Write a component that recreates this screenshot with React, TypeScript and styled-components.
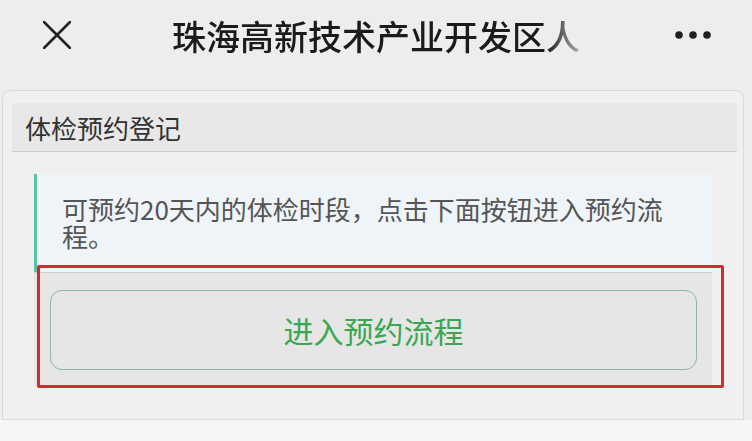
import styled, { createGlobalStyle } from "styled-components";

const GlobalStyle = createGlobalStyle`
   html, body {
      margin: 0;
      padding: 0;
      background-color: #f6f6f6;
      font-family: "Noto Sans CJK SC", "Noto Sans", sans-serif;
   }
`;

const Page = styled.div`
   width: 752px;
   height: 441px;
   overflow: hidden;
   background-color: #f6f6f6;
`;

const NavBar = styled.div`
   display: flex;
   align-items: center;
   height: 70px;
   padding: 0 40px 0 43px;
   background-color: #ededed;
`;

const Title = styled.div`
   margin-left: 101px;
   width: 420px;
   font-size: 34px;
   font-weight: 500;
   color: #1b1b1b;
   white-space: nowrap;
   overflow: hidden;
   -webkit-mask-image: linear-gradient(to right, #000 89%, rgba(0, 0, 0, 0.05) 100%);
   mask-image: linear-gradient(to right, #000 89%, rgba(0, 0, 0, 0.05) 100%);
`;

const More = styled.div`
   margin-left: auto;
   display: flex;
`;

const Wrap = styled.div`
   padding: 20px 8px 0 2px;
   background-color: #ededed;
`;

const Panel = styled.div`
   border: 1px solid #dadada;
   border-radius: 8px 8px 0 0;
   background-color: #f0f0f0;
   padding: 12px 6px 33px 9px;
`;

const PanelHeader = styled.div`
   height: 48px;
   display: flex;
   align-items: center;
   padding-left: 13px;
   background-color: #e8e8e8;
   border-bottom: 1px solid #cdcdcd;
   font-size: 26px;
   color: #333;
`;

const Section = styled.div`
   position: relative;
   margin: 22px 25px 0 22px;
`;

const Notice = styled.div`
   border-left: 3px solid #5cc2a2;
   background-color: #eef4f8;
   padding: 21px 0 23px 25px;
   font-size: 26px;
   line-height: 27px;
   color: #555;
`;

const NoticeText = styled.div`
   width: 615px;
`;

const Actions = styled.div`
   background-color: #e6e6e6;
   border-top: 1px solid #d0d0d0;
   padding: 17px 15px 16px 16px;
`;

const EnterButton = styled.div`
   height: 78px;
   display: flex;
   align-items: center;
   justify-content: center;
   border: 1px solid #8cb99b;
   border-radius: 12px;
   background-color: #e6e6e6;
   font-size: 30px;
   color: #3aa653;
`;

const Highlight = styled.div`
   position: absolute;
   left: 3px;
   top: 91px;
   width: 681px;
   height: 117px;
   border: 3px solid #c9302f;
   border-radius: 2px;
   pointer-events: none;
`;

const CloseIcon = () => (
   <svg width="28" height="28" viewBox="0 0 28 28">
      <path d="M1 1 L27 27 M27 1 L1 27" stroke="#222" strokeWidth="2.6" strokeLinecap="round" />
   </svg>
);

const MoreIcon = () => (
   <svg width="38" height="10" viewBox="0 0 38 10">
      <circle cx="5" cy="5" r="3.8" fill="#1f1f1f" />
      <circle cx="19" cy="5" r="3.8" fill="#1f1f1f" />
      <circle cx="33" cy="5" r="3.8" fill="#1f1f1f" />
   </svg>
);

export default function App() {
   return (
      <Page>
         <GlobalStyle />
         <NavBar>
            <CloseIcon />
            <Title>珠海高新技术产业开发区人</Title>
            <More>
               <MoreIcon />
            </More>
         </NavBar>
         <Wrap>
            <Panel>
               <PanelHeader>体检预约登记</PanelHeader>
               <Section>
                  <Notice>
                     <NoticeText>可预约20天内的体检时段，点击下面按钮进入预约流程。</NoticeText>
                  </Notice>
                  <Actions>
                     <EnterButton>进入预约流程</EnterButton>
                  </Actions>
                  <Highlight />
               </Section>
            </Panel>
         </Wrap>
      </Page>
   );
}
